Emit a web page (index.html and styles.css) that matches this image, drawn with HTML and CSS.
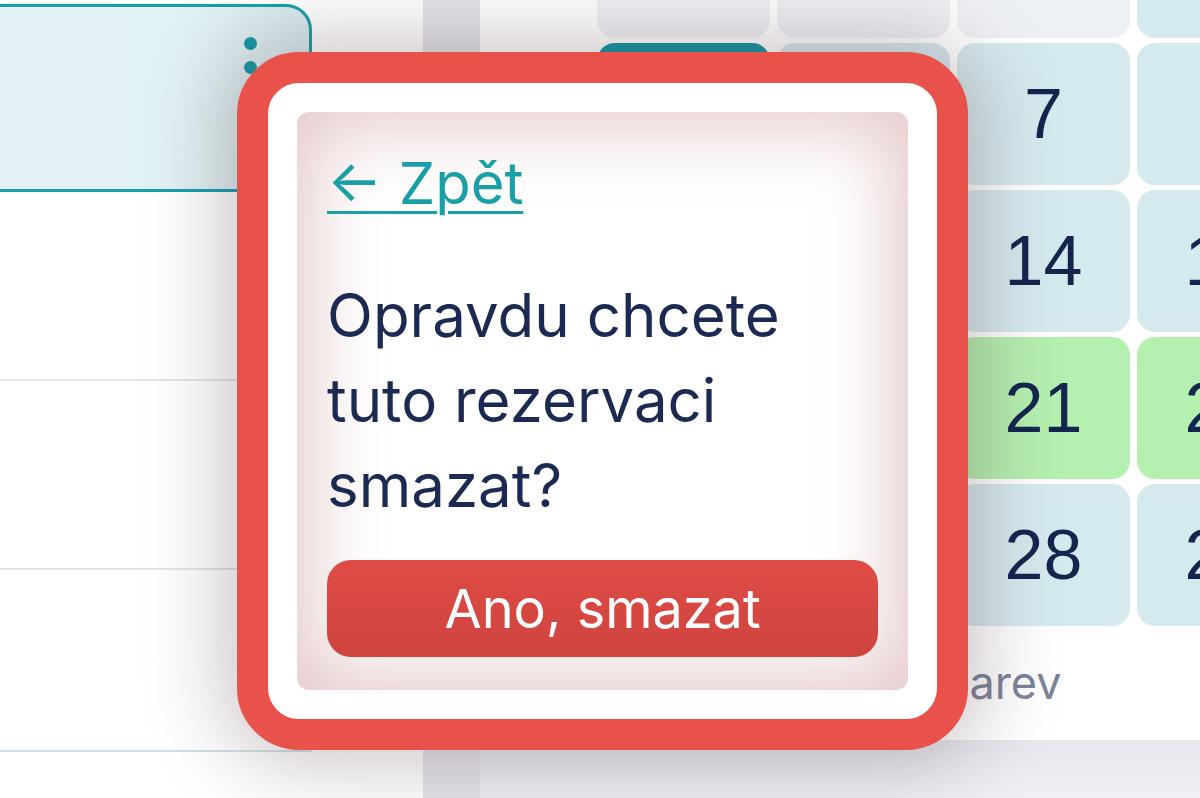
FILE: index.html
```html
<!DOCTYPE html>
<html lang="cs">
<head>
<meta charset="utf-8">
<title>Rezervace</title>
<link rel="stylesheet" href="styles.css">
</head>
<body>
<div class="screen">
  <aside class="sidebar">
    <div class="card">
      <span class="kebab"><i></i><i></i><i></i></span>
    </div>
    <div class="row"></div>
    <div class="row"></div>
    <div class="row row-last"></div>
  </aside>
  <div class="gutter"></div>
  <main class="main">
    <div class="calendar">
      <div class="cell other">29</div><div class="cell other">30</div><div class="cell other">31</div><div class="cell">1</div><div class="cell">2</div><div class="cell">3</div><div class="cell">4</div>
      <div class="cell selected">5</div><div class="cell">6</div><div class="cell">7</div><div class="cell">8</div><div class="cell">9</div><div class="cell">10</div><div class="cell">11</div>
      <div class="cell">12</div><div class="cell">13</div><div class="cell">14</div><div class="cell">15</div><div class="cell">16</div><div class="cell">17</div><div class="cell">18</div>
      <div class="cell free">19</div><div class="cell free">20</div><div class="cell free">21</div><div class="cell free">22</div><div class="cell free">23</div><div class="cell free">24</div><div class="cell free">25</div>
      <div class="cell">26</div><div class="cell">27</div><div class="cell">28</div><div class="cell">29</div><div class="cell">30</div><div class="cell other">1</div><div class="cell other">2</div>
    </div>
    <div class="legend">Vysvětlivky barev</div>
    <div class="footer-band"></div>
  </main>

  <div class="popover">
    <div class="panel">
      <a class="back" href="#">← Zpět</a>
      <p class="question">Opravdu chcete tuto rezervaci smazat?</p>
      <button class="danger" type="button">Ano, smazat</button>
    </div>
  </div>
</div>
</body>
</html>
```
FILE: styles.css
```css
* { box-sizing: border-box; }

html, body {
  margin: 0;
  padding: 0;
  width: 1200px;
  height: 798px;
  overflow: hidden;
  background: #ffffff;
  font-family: Inter, "Noto Sans", sans-serif;
}

.screen {
  position: relative;
  width: 1200px;
  height: 798px;
  display: flex;
  overflow: hidden;
}

/* ---------- sidebar ---------- */
.sidebar {
  width: 423px;
  flex: none;
  display: flex;
  flex-direction: column;
  padding-top: 4px;
  background: #ffffff;
}

.card {
  width: 332px;
  height: 188px;
  margin-left: -20px;
  border: 3px solid #17a0aa;
  border-radius: 0 26px 0 0;
  background: linear-gradient(90deg, #e4f3f5 0%, #e1f2f4 60%, #d9ebee 100%);
  display: flex;
  justify-content: flex-end;
  padding: 30px 52px 0 0;
}

.kebab {
  display: flex;
  flex-direction: column;
  gap: 11px;
}

.kebab i {
  display: block;
  width: 13px;
  height: 13px;
  border-radius: 50%;
  background: #149aa5;
}

.row {
  width: 312px;
  height: 189px;
  border-bottom: 2px solid #e0e6e9;
}

.row-last {
  height: 182px;
  border-bottom-color: #cfe2e5;
}

/* ---------- gutter ---------- */
.gutter {
  width: 57px;
  flex: none;
  background: #e5e5eb;
}

/* ---------- main ---------- */
.main {
  flex: 1;
  position: relative;
  display: flex;
  flex-direction: column;
  overflow: hidden;
  background: #ffffff;
}

.calendar {
  display: grid;
  grid-template-columns: repeat(7, 173px);
  grid-auto-rows: 142px;
  column-gap: 7px;
  row-gap: 5px;
  margin: -104px 0 0 117px;
}

.cell {
  border-radius: 18px;
  background: #d5eaee;
  color: #14254f;
  font-family: "Liberation Sans", Arial, sans-serif;
  font-size: 70px;
  display: flex;
  align-items: center;
  justify-content: center;
}

.cell.other {
  background: #eef1f4;
  color: #9aa3b5;
}

.cell.selected {
  background: #1597a5;
  color: #ffffff;
}

.cell.free {
  background: #b5f0b0;
}

.legend {
  margin: 29px 0 0 206px;
  font-size: 45px;
  color: #7b849a;
  white-space: nowrap;
  height: 85px;
}

.footer-band {
  flex: 1;
  background: linear-gradient(180deg, #e6e8ee 0%, #eef0f4 100%);
}

/* ---------- popover ---------- */
.popover {
  position: absolute;
  left: 237px;
  top: 52px;
  width: 731px;
  height: 698px;
  border: 31px solid #e9524a;
  border-radius: 62px;
  background: #ffffff;
  padding: 29px;
  box-shadow: 0 0 80px 14px rgba(70, 40, 50, 0.28);
}

.panel {
  height: 100%;
  border-radius: 12px;
  background: #ffffff;
  box-shadow: inset 0 0 70px 18px rgba(200, 140, 140, 0.45);
  padding: 35px 30px 0 30px;
  display: flex;
  flex-direction: column;
  align-items: flex-start;
}

.back {
  font-size: 58px;
  line-height: 72px;
  color: #1a9fa9;
  text-decoration: underline;
  text-decoration-thickness: 3px;
  text-underline-offset: 7px;
}

.question {
  margin: 54px 0 0 0;
  font-size: 60px;
  line-height: 85px;
  color: #1b2a52;
}

.danger {
  margin-top: 32px;
  width: 100%;
  height: 97px;
  border: none;
  border-radius: 24px;
  background: linear-gradient(180deg, #e04b45 0%, #cf4440 100%);
  color: #ffffff;
  font-family: Inter, "Noto Sans", sans-serif;
  font-size: 54px;
  padding: 0;
}
```
